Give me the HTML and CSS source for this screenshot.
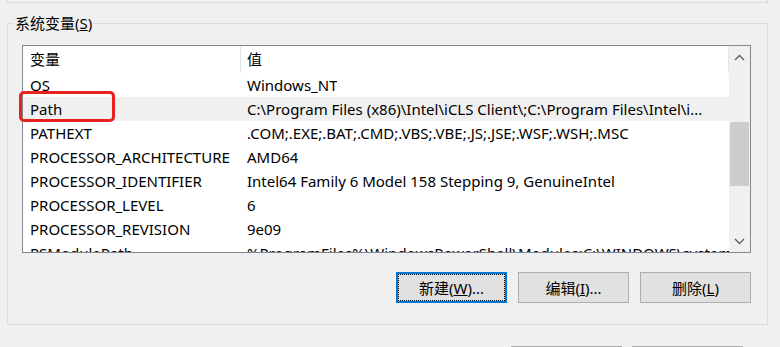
FILE: index.html
```html
<!DOCTYPE html>
<html lang="zh-CN">
<head>
  <meta charset="UTF-8" />
  <title>环境变量</title>
  <link rel="stylesheet" href="styles.css">
</head>
<body>

  <div class="prev-group"></div>

  <div class="group">
    <div class="legend">系统变量(<u>S</u>)</div>

    <div class="listbox">
      <div class="rows">
        <div class="row header">
          <div class="name">变量</div>
          <div class="value">值</div>
        </div>
        <div class="row"><div class="name">OS</div><div class="value">Windows_NT</div></div>
        <div class="row selected"><div class="name">Path</div><div class="value">C:\Program Files (x86)\Intel\iCLS Client\;C:\Program Files\Intel\i...</div></div>
        <div class="row"><div class="name">PATHEXT</div><div class="value">.COM;.EXE;.BAT;.CMD;.VBS;.VBE;.JS;.JSE;.WSF;.WSH;.MSC</div></div>
        <div class="row"><div class="name">PROCESSOR_ARCHITECTURE</div><div class="value">AMD64</div></div>
        <div class="row"><div class="name">PROCESSOR_IDENTIFIER</div><div class="value">Intel64 Family 6 Model 158 Stepping 9, GenuineIntel</div></div>
        <div class="row"><div class="name">PROCESSOR_LEVEL</div><div class="value">6</div></div>
        <div class="row"><div class="name">PROCESSOR_REVISION</div><div class="value">9e09</div></div>
        <div class="row"><div class="name">PSModulePath</div><div class="value">%ProgramFiles%\WindowsPowerShell\Modules;C:\WINDOWS\system32</div></div>
      </div>

      <div class="scrollbar">
        <div class="arrow">
          <svg width="11" height="7" viewBox="0 0 11 7"><path d="M1 6 L5.5 1.5 L10 6" fill="none" stroke="#606060" stroke-width="1.4"/></svg>
        </div>
        <div class="thumb"></div>
        <div class="arrow down">
          <svg width="11" height="7" viewBox="0 0 11 7"><path d="M1 1 L5.5 5.5 L10 1" fill="none" stroke="#606060" stroke-width="1.4"/></svg>
        </div>
      </div>

      <div class="mark"></div>
    </div>

    <div class="actions">
      <button class="btn focused">新建(<u>W</u>)...</button>
      <button class="btn">编辑(<u>I</u>)...</button>
      <button class="btn">删除(<u>L</u>)</button>
    </div>
  </div>

  <div class="dialog-actions">
    <button class="btn"></button>
    <button class="btn"></button>
  </div>

</body>
</html>
```

FILE: styles.css
```css
html, body {
  margin: 0;
  overflow: hidden;
}
body {
  background-color: #f0f0f0;
  font-family: "Noto Sans", "Noto Sans CJK SC", sans-serif;
  font-size: 15px;
  color: #000;
}
.prev-group {
  margin-left: 7px;
  width: 759px;
  height: 2px;
  border: 1px solid #dcdcdc;
  border-top: none;
}
.group {
  position: relative;
  margin: 20px 0 0 7px;
  width: 759px;
  height: 300px;
  border: 1px solid #dcdcdc;
}
.legend {
  position: absolute;
  top: -11px;
  left: 6px;
  padding: 0 1px;
  line-height: 20px;
  background-color: #f0f0f0;
}
.listbox {
  position: relative;
  display: flex;
  margin: 21px 0 0 14px;
  width: 727px;
  height: 206px;
  border: 1px solid #828790;
  background: #fff;
}
.rows {
  width: 706px;
  overflow: hidden;
}
.row {
  display: flex;
  height: 24px;
  line-height: 24px;
  white-space: nowrap;
}
.row .name {
  width: 211px;
  padding-left: 7px;
  flex-shrink: 0;
}
.row .value {
  padding-left: 6px;
  overflow: hidden;
}
.header {
  height: 27px;
  line-height: 27px;
  border-right: 1px solid #e5e5e5;
}
.header .name {
  width: 210px;
  border-right: 1px solid #e5e5e5;
}
.selected {
  background-color: #f0f0f0;
}
.scrollbar {
  display: flex;
  flex-direction: column;
  width: 21px;
  background-color: #f0f0f0;
}
.arrow {
  display: flex;
  align-items: center;
  justify-content: center;
  height: 21px;
  padding-top: 2px;
  box-sizing: border-box;
}
.arrow.down {
  margin-top: auto;
  padding-top: 0;
}
.thumb {
  margin: 55px 1px 0 1px;
  height: 64px;
  background-color: #cdcdcd;
}
.mark {
  position: absolute;
  left: -4px;
  top: 45px;
  width: 90px;
  height: 25px;
  border: 3px solid #e8231f;
  border-radius: 5px;
}
.actions {
  display: flex;
  justify-content: flex-end;
  gap: 11px;
  margin: 19px 0 0 14px;
  width: 729px;
}
.btn {
  width: 111px;
  height: 31px;
  padding: 0;
  background-color: #e1e1e1;
  border: 1px solid #adadad;
  font-family: inherit;
  font-size: 15px;
  color: #000;
}
.btn.focused {
  border-color: #0078d7;
  box-shadow: inset 0 0 0 1px #0078d7;
  outline: 1px dotted #000;
  outline-offset: -3px;
}
.dialog-actions {
  display: flex;
  gap: 10px;
  margin: 21px 0 0 511px;
}
.dialog-actions .btn {
  flex-shrink: 0;
}
```
